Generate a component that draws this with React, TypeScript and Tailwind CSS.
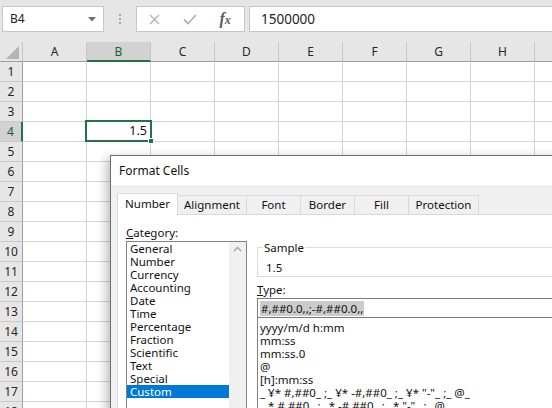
import React from "react";

const COLS = ["A", "B", "C", "D", "E", "F", "G", "H", "I"];
const ROWS = Array.from({ length: 18 }, (_, i) => i + 1);

const CATEGORIES = [
  "General",
  "Number",
  "Currency",
  "Accounting",
  "Date",
  "Time",
  "Percentage",
  "Fraction",
  "Scientific",
  "Text",
  "Special",
  "Custom",
];

const TYPES = [
  "yyyy/m/d h:mm",
  "mm:ss",
  "mm:ss.0",
  "@",
  "[h]:mm:ss",
  '_ ¥* #,##0_ ;_ ¥* -#,##0_ ;_ ¥* "-"_ ;_ @_ ',
  '_ * #,##0_ ;_ * -#,##0_ ;_ * "-"_ ;_ @_ ',
];

const TABS = [
  { label: "Number", w: "w-[61px]", active: true },
  { label: "Alignment", w: "w-[69px]" },
  { label: "Font", w: "w-[54px]" },
  { label: "Border", w: "w-[54px]" },
  { label: "Fill", w: "w-[54px]" },
  { label: "Protection", w: "w-[70px]" },
];

function FormulaBar() {
  return (
    <div className="flex h-[42px] items-start bg-[#e6e6e6] pt-[6px]">
      <div className="ml-[2px] flex h-[26px] w-[102px] shrink-0 items-center justify-between border border-[#c6c6c6] bg-white pl-[7px] pr-[7px] text-[12px] text-[#222]">
        <span>B4</span>
        <svg width="8" height="5" viewBox="0 0 8 5">
          <path d="M0 0 L8 0 L4 4.5 Z" fill="#6e6e6e" />
        </svg>
      </div>
      <div className="flex h-[26px] w-[32px] shrink-0 flex-col items-center justify-center gap-[2px]">
        <span className="h-[2px] w-[2px] bg-[#a6a6a6]" />
        <span className="h-[2px] w-[2px] bg-[#a6a6a6]" />
        <span className="h-[2px] w-[2px] bg-[#a6a6a6]" />
      </div>
      <div className="flex h-[26px] w-[109px] shrink-0 items-center border border-[#c6c6c6] bg-white">
        <div className="flex w-[36px] justify-center">
          <svg width="11" height="11" viewBox="0 0 11 11">
            <path d="M1 1 L10 10 M10 1 L1 10" stroke="#b3b3b3" strokeWidth="1.4" fill="none" />
          </svg>
        </div>
        <div className="flex w-[34px] justify-center">
          <svg width="14" height="11" viewBox="0 0 14 11">
            <path d="M1 5.5 L5 9.5 L13 1" stroke="#b3b3b3" strokeWidth="1.8" fill="none" />
          </svg>
        </div>
        <div className="flex w-[38px] justify-center font-['Liberation_Serif',serif] text-[16px] font-bold italic leading-none text-[#5a5a5a]">
          <span>
            f<span className="text-[12px]">x</span>
          </span>
        </div>
      </div>
      <div className="ml-[4px] flex h-[26px] flex-1 items-center border border-r-0 border-[#c6c6c6] bg-white pl-[11px] text-[13.5px] text-[#222]">
        1500000
      </div>
    </div>
  );
}

function HeaderRow() {
  return (
    <div className="flex h-[20px] bg-[#e6e6e6]">
      <div className="relative h-[20px] w-[23px] shrink-0 border-b border-r border-[#9e9e9e] border-r-[#c6c6c6]">
        <svg className="absolute left-[6px] top-[4px]" width="13" height="13" viewBox="0 0 13 13">
          <path d="M13 0 L13 13 L0 13 Z" fill="#b4b4b4" />
        </svg>
      </div>
      {COLS.map((c) =>
        c === "B" ? (
          <div
            key={c}
            className="flex h-[20px] w-[64px] shrink-0 items-center justify-center border-b-2 border-r border-b-[#217346] border-r-[#c6c6c6] bg-[#d2d2d2] pt-[2px] text-[12px] text-[#1f5a3a]"
          >
            {c}
          </div>
        ) : (
          <div
            key={c}
            className="flex h-[20px] w-[64px] shrink-0 items-center justify-center border-b border-r border-b-[#9e9e9e] border-r-[#c6c6c6] text-[12px] text-[#262626]"
          >
            {c}
          </div>
        )
      )}
    </div>
  );
}

function GridRow({ n }: { n: number }) {
  const sel = n === 4;
  return (
    <div className="flex h-[20px]">
      <div
        className={
          sel
            ? "flex h-[20px] w-[23px] shrink-0 items-center justify-center border-b border-r-2 border-b-[#c8c8c8] border-r-[#217346] bg-[#d2d2d2] text-[12px] text-[#1f5a3a]"
            : "flex h-[20px] w-[23px] shrink-0 items-center justify-center border-b border-r border-b-[#c8c8c8] border-r-[#9e9e9e] bg-[#e6e6e6] text-[12px] text-[#262626]"
        }
      >
        {n}
      </div>
      {COLS.map((c) => (
        <div
          key={c}
          className="flex h-[20px] w-[64px] shrink-0 items-center justify-end border-b border-r border-[#d4d4d4] pr-[3px] text-[12.5px] text-[#111]"
        >
          {sel && c === "B" ? "1.5" : ""}
        </div>
      ))}
    </div>
  );
}

function Dialog() {
  return (
    <div className="absolute left-[110px] top-[155px] h-[270px] w-[470px] border border-[#6f6f6f] bg-[#f0f0f0] shadow-[-3px_3px_10px_rgba(0,0,0,0.28)]">
      <div className="flex h-[29px] items-center bg-white pl-[8px] text-[12px] text-[#111]">Format Cells</div>
      <div className="pl-[6px] pt-[8px]">
        <div className="flex h-[21px] items-end">
          {TABS.map((t) =>
            t.active ? (
              <div
                key={t.label}
                className={`relative z-10 -mb-px flex h-[22px] ${t.w} shrink-0 items-center justify-center border border-b-0 border-[#d9d9d9] bg-white pb-[1px] text-[11.5px] text-[#111]`}
              >
                {t.label}
              </div>
            ) : (
              <div
                key={t.label}
                className={`flex h-[19px] ${t.w} shrink-0 items-center justify-center border-r border-t border-[#d9d9d9] text-[11.5px] text-[#111]`}
              >
                {t.label}
              </div>
            )
          )}
        </div>
        <div className="flex h-[220px] border border-[#d9d9d9] bg-white pl-[8px] pt-[11px] text-[11.5px] leading-[13px] text-[#111]">
          <div className="flex w-[121px] shrink-0 flex-col">
            <div className="mb-[2px] h-[13px]">
              <span className="underline">C</span>ategory:
            </div>
            <div className="flex h-[200px] border border-[#828282]">
              <div className="flex w-[102px] flex-col pt-0">
                {CATEGORIES.map((c) => (
                  <div
                    key={c}
                    className={
                      c === "Custom"
                        ? "h-[13px] bg-[#0078d7] pl-[3px] text-white"
                        : "h-[13px] pl-[3px]"
                    }
                  >
                    {c}
                  </div>
                ))}
              </div>
              <div className="flex w-[17px] justify-center bg-[#f0f0f0] pt-[4px]">
                <svg width="9" height="6" viewBox="0 0 9 6">
                  <path d="M0.8 5.2 L4.5 1.5 L8.2 5.2" stroke="#a8a8a8" strokeWidth="1.5" fill="none" />
                </svg>
              </div>
            </div>
          </div>
          <div className="ml-[10px] flex w-[300px] shrink-0 flex-col">
            <div className="relative mt-[21px] h-[31px] border border-[#dcdcdc] pl-[8px] pt-[13px]">
              <span className="absolute left-[5px] top-[-7px] bg-white px-[1px]">Sample</span>
              1.5
            </div>
            <div className="mb-[2px] mt-[6px] h-[13px]">
              <span className="underline">T</span>ype:
            </div>
            <div className="flex h-[20px] items-center border border-[#7a7a7a] pl-[2px]">
              <span className="bg-[#cccccc] px-px leading-[15px]">#,##0.0,,;-#,##0.0,,</span>
            </div>
            <div className="flex h-[120px] flex-col border border-t-0 border-[#828282] pl-[2px] pt-[3px]">
              {TYPES.map((t, i) => (
                <div key={i} className="h-[13px] whitespace-pre">
                  {t}
                </div>
              ))}
            </div>
          </div>
        </div>
      </div>
    </div>
  );
}

export default function App() {
  return (
    <div className="relative h-[408px] w-[552px] overflow-hidden bg-white font-['Noto_Sans',sans-serif]">
      <FormulaBar />
      <HeaderRow />
      {ROWS.map((n) => (
        <GridRow key={n} n={n} />
      ))}
      <div className="absolute left-[85px] top-[120px] h-[22px] w-[67px] border-2 border-[#217346]" />
      <div className="absolute left-[148px] top-[138px] h-[6px] w-[6px] border border-white bg-[#217346]" />
      <Dialog />
    </div>
  );
}
